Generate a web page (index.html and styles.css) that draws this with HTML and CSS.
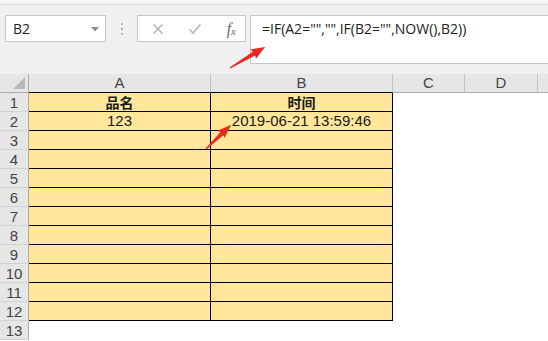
FILE: index.html
```html
<!DOCTYPE html>
<html lang="zh">
<head>
<meta charset="utf-8">
<link rel="stylesheet" href="styles.css">
</head>
<body>
<div class="app">
  <div class="edge"></div>
  <div class="fbar">
    <div class="namebox"><span>B2</span>
      <svg class="dd" width="8" height="5" viewBox="0 0 8 5"><path d="M0 0H8L4 4.5Z" fill="#8a8a8a"/></svg>
    </div>
    <div class="grip"><i></i><i></i><i></i></div>
    <div class="fxbox">
      <svg width="12" height="12" viewBox="0 0 12 12"><path d="M1.5 1.5L10.5 10.5M10.5 1.5L1.5 10.5" stroke="#b4b4b4" stroke-width="1.5" fill="none"/></svg>
      <svg width="14" height="12" viewBox="0 0 14 12"><path d="M1.5 6.5L5 10L12.5 1.5" stroke="#b4b4b4" stroke-width="1.6" fill="none"/></svg>
      <span class="fx">f<sub>x</sub></span>
    </div>
    <div class="formula">=IF(A2="","",IF(B2="",NOW(),B2))</div>
  </div>
  <div class="sheet">
    <div class="corner"><svg width="12" height="12" viewBox="0 0 12 12"><path d="M12 0V12H0Z" fill="#b9b9b9"/></svg></div>
    <div class="ch">A</div><div class="ch">B</div><div class="ch">C</div><div class="ch">D</div><div class="ch last"></div>

    <div class="rh">1</div><div class="y bold">品名</div><div class="y bold">时间</div><div class="w"></div><div class="w"></div><div class="w"></div>
    <div class="rh">2</div><div class="y">123</div><div class="y">2019-06-21 13:59:46</div><div class="w"></div><div class="w"></div><div class="w"></div>
    <div class="rh">3</div><div class="y"></div><div class="y"></div><div class="w"></div><div class="w"></div><div class="w"></div>
    <div class="rh">4</div><div class="y"></div><div class="y"></div><div class="w"></div><div class="w"></div><div class="w"></div>
    <div class="rh">5</div><div class="y"></div><div class="y"></div><div class="w"></div><div class="w"></div><div class="w"></div>
    <div class="rh">6</div><div class="y"></div><div class="y"></div><div class="w"></div><div class="w"></div><div class="w"></div>
    <div class="rh">7</div><div class="y"></div><div class="y"></div><div class="w"></div><div class="w"></div><div class="w"></div>
    <div class="rh">8</div><div class="y"></div><div class="y"></div><div class="w"></div><div class="w"></div><div class="w"></div>
    <div class="rh">9</div><div class="y"></div><div class="y"></div><div class="w"></div><div class="w"></div><div class="w"></div>
    <div class="rh">10</div><div class="y"></div><div class="y"></div><div class="w"></div><div class="w"></div><div class="w"></div>
    <div class="rh">11</div><div class="y"></div><div class="y"></div><div class="w"></div><div class="w"></div><div class="w"></div>
    <div class="rh">12</div><div class="y"></div><div class="y"></div><div class="w"></div><div class="w"></div><div class="w"></div>
    <div class="rh">13</div><div class="w"></div><div class="w"></div><div class="w"></div><div class="w"></div><div class="w"></div>
  </div>
  <svg class="arrows" width="548" height="341" viewBox="0 0 548 341">
    <g transform="translate(230 68) rotate(-31)">
      <path d="M0 -0.6L28 -2.2L27 -5.5L41 0L27 5.5L28 2.2L0 0.6Z" fill="#e8281e"/>
    </g>
    <g transform="translate(206 149) rotate(-44)">
      <path d="M0 -0.6L22 -2L21 -5L35 0L21 5L22 2L0 0.6Z" fill="#e8281e"/>
    </g>
  </svg>
</div>
</body>
</html>
```

FILE: styles.css
```css
* { box-sizing: border-box; }
html, body { margin: 0; padding: 0; }
body { width: 548px; height: 341px; overflow: hidden; background: #fff; font-family: "Liberation Sans", Arial, sans-serif; }
.app { position: relative; width: 548px; height: 341px; }

.edge { height: 5px; background: #f7f7f7; border-bottom: 1px solid #dadada; }
.fbar { height: 69px; background: #f0f0f0; display: flex; align-items: flex-start; padding-top: 10px; }

.namebox { margin-left: 5px; width: 101px; height: 27px; background: #fff; border: 1px solid #c6c6c6; display: flex; align-items: center; justify-content: space-between; padding: 0 6px 0 7px; font-family: "Open Sans", "Noto Sans", sans-serif; font-size: 14px; color: #222; }
.namebox .dd { margin-top: 1px; }

.grip { width: 31px; height: 27px; display: flex; flex-direction: column; align-items: center; justify-content: center; gap: 3px; }
.grip i { display: block; width: 2px; height: 2px; background: #b0b0b0; }

.fxbox { width: 109px; height: 27px; background: #fff; border: 1px solid #c6c6c6; display: flex; align-items: center; padding: 0 9px 0 14px; justify-content: space-between; }
.fx { font-family: "Liberation Serif", serif; font-style: italic; font-size: 16px; color: #6a6a6a; line-height: 1; }
.fx sub { font-size: 11px; vertical-align: -1px; }

.formula { margin-left: 4px; flex: 1; height: 49px; background: #fff; border: 1px solid #c6c6c6; border-right: none; padding: 3px 0 0 11px; font-family: "Open Sans", "Noto Sans", sans-serif; font-size: 14px; color: #222; line-height: 19px; }

.sheet { display: grid; grid-template-columns: 29px 182px 182px 72px 73px 1fr; grid-auto-rows: 19px; }
.corner { background: #e6e6e6; border-right: 1px solid #ababab; border-bottom: 1px solid #ababab; display: flex; align-items: flex-end; justify-content: flex-end; padding: 0 3px 3px 0; }
.ch { background: #e6e6e6; border-right: 1px solid #c4c4c4; border-bottom: 1px solid #ababab; text-align: center; font-size: 15px; line-height: 18px; color: #444; }
.ch:nth-child(2), .ch:nth-child(3) { border-bottom-color: #000; }
.ch.last { border-right: none; }
.rh { background: #e6e6e6; border-right: 1px solid #ababab; border-bottom: 1px solid #d2d2d2; text-align: center; font-size: 15px; line-height: 19px; color: #444; }
.y { background: #ffe699; border-right: 1px solid #000; border-bottom: 1px solid #000; text-align: center; font-size: 15px; line-height: 18px; color: #1a1a1a; }
.y.bold { font-family: "Noto Sans CJK SC", sans-serif; font-weight: 700; font-size: 14px; line-height: 18px; }
.w { background: #fff; }

.arrows { position: absolute; left: 0; top: 0; pointer-events: none; }
```
